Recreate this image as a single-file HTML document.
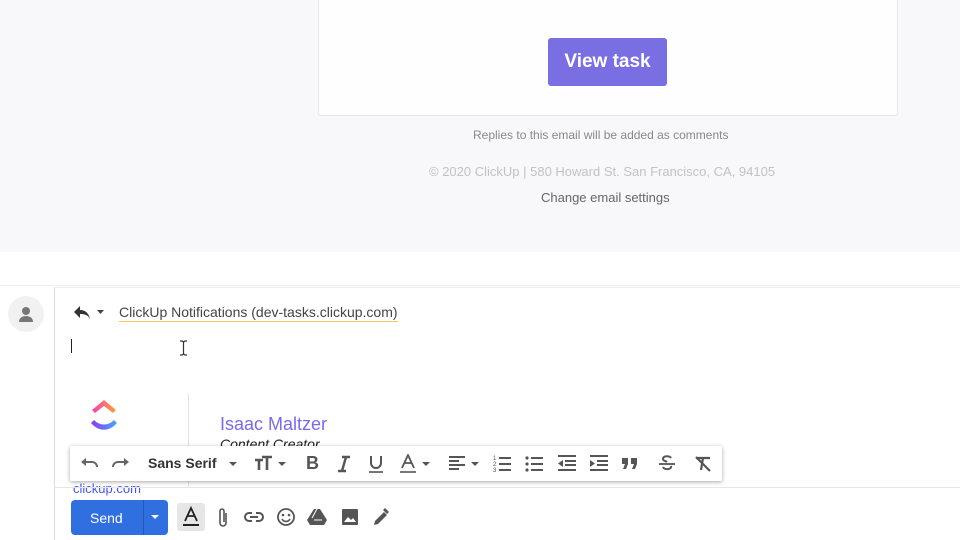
<!DOCTYPE html>
<html><head><style>
*{margin:0;padding:0;box-sizing:border-box}
body{width:960px;height:540px;overflow:hidden;background:#fff;font-family:"Liberation Sans",Arial,sans-serif;position:relative}
.top{position:absolute;left:0;top:0;width:960px;height:252px;background:#f8f8fb}
.card{position:absolute;left:318px;top:-2px;width:580px;height:118px;background:#fefefe;border:1px solid #e6e6ea;border-radius:3px}
.vt{position:absolute;left:548px;top:38px;width:119px;height:48px;background:#7a6ee3;border-radius:3px;color:#fff;font-weight:bold;font-size:19px;text-align:center;line-height:48px}
.a{position:absolute;color:#8a8a8e;font-size:12px;}
.compose{position:absolute;left:54px;top:287px;width:906px;height:253px;border-left:1px solid #ddd;border-top:1px solid #eee;background:#fff}
.tb{position:absolute;left:70px;top:446px;width:652px;height:35px;background:#fff;box-shadow:0 1px 4px rgba(0,0,0,.35);border-radius:2px}
.tb svg{position:absolute;top:8px}
.send{position:absolute;left:71px;top:500px;width:97px;height:35px;background:#2f6fe0;border-radius:4px;color:#fff;font-size:14px}
</style></head><body>
<div class="top"></div>
<div class="card"></div>
<div class="vt">View task</div>
<div class="a" style="left:473px;top:128px;color:#888">Replies to this email will be added as comments</div>
<div class="a" style="left:429px;top:164px;font-size:13px;color:#c2c2c6">© 2020 ClickUp | 580 Howard St. San Francisco, CA, 94105</div>
<div class="a" style="left:541px;top:190px;font-size:13px;color:#666">Change email settings</div>
<div style="position:absolute;left:0;top:285px;width:960px;height:1px;background:#eee"></div>
<div style="position:absolute;left:8px;top:296px;width:36px;height:36px;border-radius:50%;background:#f1f1f1"></div>
<svg style="position:absolute;left:16px;top:304px" width="20" height="20" viewBox="0 0 20 20"><circle cx="10" cy="7" r="4" fill="#777"/><path d="M3 18c0-4 3-6 7-6s7 2 7 6z" fill="#777"/></svg>
<div class="compose"></div>
<svg style="position:absolute;left:72px;top:304px" width="36" height="16" viewBox="0 0 36 16"><path d="M8 2L2 8l6 6V10c5 0 8 1 10 5-1-5-4-9-10-9z" fill="#333"/><path d="M25 6h7l-3.5 4z" fill="#444"/></svg>
<div style="position:absolute;left:119px;top:304px;font-size:14px;color:#444;border-bottom:1px solid #f2c860;padding-bottom:1px">ClickUp Notifications (dev-tasks.clickup.com)</div>
<div style="position:absolute;left:71px;top:339px;width:1px;height:14px;background:#222"></div>
<svg style="position:absolute;left:179px;top:340px" width="9" height="16" viewBox="0 0 9 16"><path d="M1 1h2l1.5 1L6 1h2M4.5 2v12M1 15h2l1.5-1L6 15h2" stroke="#333" stroke-width="1.2" fill="none"/></svg>
<svg style="position:absolute;left:89px;top:399px" width="32" height="36" viewBox="0 0 32 36"><defs><linearGradient id="g1" x1="0" x2="1"><stop offset="0" stop-color="#f43fb4"/><stop offset="1" stop-color="#f9a13a"/></linearGradient><linearGradient id="g2" x1="0" x2="1"><stop offset="0" stop-color="#8b3cf0"/><stop offset="1" stop-color="#4aa8f5"/></linearGradient></defs><path d="M3 11L15 1l12 10-3 3-9-7-9 7z" fill="url(#g1)"/><path d="M2 24l3-3c6 6 14 6 20 0l3 3c-8 9-18 9-26 0z" fill="url(#g2)"/></svg>
<div style="position:absolute;left:188px;top:394px;width:1px;height:94px;background:#e3e3e3"></div>
<div style="position:absolute;left:220px;top:414px;font-size:18px;color:#7b68ee">Isaac Maltzer</div>
<div style="position:absolute;left:220px;top:436px;font-size:14px;color:#222;font-style:italic">Content Creator</div>
<div style="position:absolute;left:73px;top:481px;font-size:13px;color:#4455ee">clickup.com</div>
<div class="tb">
<svg style="left:9px" width="20" height="20" viewBox="0 0 20 20"><path d="M5 8h8a5 5 0 0 1 5 5" stroke="#666" stroke-width="2" fill="none"/><path d="M2 8l5-4v8z" fill="#666"/></svg>
<svg style="left:41px" width="20" height="20" viewBox="0 0 20 20"><path d="M15 8H7a5 5 0 0 0-5 5" stroke="#666" stroke-width="2" fill="none"/><path d="M18 8l-5-4v8z" fill="#666"/></svg>
<span style="position:absolute;left:78px;top:9px;font-size:14px;font-weight:bold;color:#333">Sans Serif</span>
<svg style="left:157px" width="12" height="20" viewBox="0 0 12 20"><path d="M2 8h8l-4 4z" fill="#555"/></svg>
<svg style="left:184px" width="36" height="20" viewBox="0 0 36 20"><path d="M1 6h8M5 6v10M8 3h10M13 3v13" stroke="#555" stroke-width="2.6" fill="none"/><path d="M24 8h8l-4 4z" fill="#555"/></svg>
<span style="position:absolute;left:236px;top:7px;font-weight:bold;font-size:18px;color:#555">B</span>
<svg style="left:266px" width="16" height="20" viewBox="0 0 16 20"><path d="M6 3h8M2 17h8M10 3L6 17" stroke="#555" stroke-width="2.4" fill="none"/></svg>
<svg style="left:298px" width="16" height="20" viewBox="0 0 16 20"><path d="M3 2v7a5 5 0 0 0 10 0V2" stroke="#555" stroke-width="2" fill="none"/><path d="M1 18h14" stroke="#555" stroke-width="1.6"/></svg>
<svg style="left:330px" width="34" height="20" viewBox="0 0 34 20"><path d="M2 14L8 1l6 13M4.5 9h7" stroke="#555" stroke-width="1.8" fill="none"/><path d="M0 18h16" stroke="#555" stroke-width="1.6"/><path d="M22 8h8l-4 4z" fill="#555"/></svg>
<svg style="left:378px" width="34" height="20" viewBox="0 0 34 20"><path d="M1 3h16M1 7h10M1 11h16M1 15h10" stroke="#555" stroke-width="2" fill="none"/><path d="M23 8h8l-4 4z" fill="#555"/></svg>
<svg style="left:423px" width="20" height="20" viewBox="0 0 20 20"><text x="0" y="6" font-size="6" fill="#555" font-family="Liberation Sans">1</text><text x="0" y="12" font-size="6" fill="#555" font-family="Liberation Sans">2</text><text x="0" y="18" font-size="6" fill="#555" font-family="Liberation Sans">3</text><path d="M6 4h12M6 10h12M6 16h12" stroke="#555" stroke-width="2"/></svg>
<svg style="left:455px" width="20" height="20" viewBox="0 0 20 20"><circle cx="2" cy="4" r="1.6" fill="#555"/><circle cx="2" cy="10" r="1.6" fill="#555"/><circle cx="2" cy="16" r="1.6" fill="#555"/><path d="M6 4h12M6 10h12M6 16h12" stroke="#555" stroke-width="2"/></svg>
<svg style="left:487px" width="20" height="20" viewBox="0 0 20 20"><path d="M1 2h18M8 7h11M8 11h11M1 16h18" stroke="#555" stroke-width="2"/><path d="M6 6v7L1 9.5z" fill="#555"/></svg>
<svg style="left:519px" width="20" height="20" viewBox="0 0 20 20"><path d="M1 2h18M8 7h11M8 11h11M1 16h18" stroke="#555" stroke-width="2"/><path d="M1 6v7l5-3.5z" fill="#555"/></svg>
<svg style="left:551px" width="18" height="20" viewBox="0 0 18 20"><path d="M1 4h6v6l-2 5H2l2-5H1zM10 4h6v6l-2 5h-3l2-5h-3z" fill="#555"/></svg>
<svg style="left:588px" width="18" height="20" viewBox="0 0 18 20"><path d="M13 4c-1-2-8-3-8 1 0 2 3 2 4 3M5 13c1 3 9 3 8-1" stroke="#555" stroke-width="2" fill="none"/><path d="M1 10h16" stroke="#555" stroke-width="1.8"/></svg>
<svg style="left:624px" width="18" height="20" viewBox="0 0 18 20"><path d="M2 4h14M9 4L7 16M2 3l14 14" stroke="#555" stroke-width="2.2" fill="none"/></svg>
</div>
<div style="position:absolute;left:54px;top:487px;width:906px;height:1px;background:#e6e6e6"></div>
<div class="send"><span style="position:absolute;left:19px;top:10px">Send</span><span style="position:absolute;left:72px;top:0;width:1px;height:35px;background:#2258b8"></span><svg style="position:absolute;left:79px;top:13px" width="10" height="8" viewBox="0 0 10 8"><path d="M1 2h8l-4 4z" fill="#fff"/></svg></div>
<div style="position:absolute;left:177px;top:503px;width:28px;height:28px;background:#e6e6e6;border-radius:3px"></div>
<svg style="position:absolute;left:181px;top:506px" width="20" height="22" viewBox="0 0 20 22"><path d="M4 15L10 2l6 13M6.5 10h7" stroke="#222" stroke-width="1.8" fill="none"/><path d="M2 19h16" stroke="#222" stroke-width="2"/></svg>
<svg style="position:absolute;left:216px;top:507px" width="14" height="22" viewBox="0 0 14 22"><path d="M10 6v10a3 3 0 0 1-6 0V4a2 2 0 0 1 4 0v11" stroke="#555" stroke-width="1.6" fill="none"/></svg>
<svg style="position:absolute;left:244px;top:510px" width="20" height="14" viewBox="0 0 20 14"><path d="M8 3H5a4 4 0 0 0 0 8h3M12 3h3a4 4 0 0 1 0 8h-3M6 7h8" stroke="#555" stroke-width="2" fill="none"/></svg>
<svg style="position:absolute;left:276px;top:507px" width="20" height="20" viewBox="0 0 20 20"><circle cx="10" cy="10" r="8" stroke="#555" stroke-width="1.8" fill="none"/><circle cx="7" cy="8" r="1.3" fill="#555"/><circle cx="13" cy="8" r="1.3" fill="#555"/><path d="M6 12a4.5 4.5 0 0 0 8 0" stroke="#555" stroke-width="1.6" fill="none"/></svg>
<svg style="position:absolute;left:307px;top:508px" width="20" height="18" viewBox="0 0 20 18"><path d="M7 1h6l7 11-3 5H3L0 12z" fill="#555"/><path d="M7 12h8M10 1L5 10" stroke="#fff" stroke-width="1"/></svg>
<svg style="position:absolute;left:342px;top:509px" width="16" height="16" viewBox="0 0 16 16"><rect width="16" height="16" rx="1" fill="#555"/><path d="M2 13l4-5 3 3 2-2 3 4z" fill="#fff"/></svg>
<svg style="position:absolute;left:372px;top:507px" width="18" height="20" viewBox="0 0 18 20"><path d="M2 18l1-4 9-9 3 3-9 9zM11 3l2-2 4 4-2 2" fill="#555"/></svg>
</body></html>
